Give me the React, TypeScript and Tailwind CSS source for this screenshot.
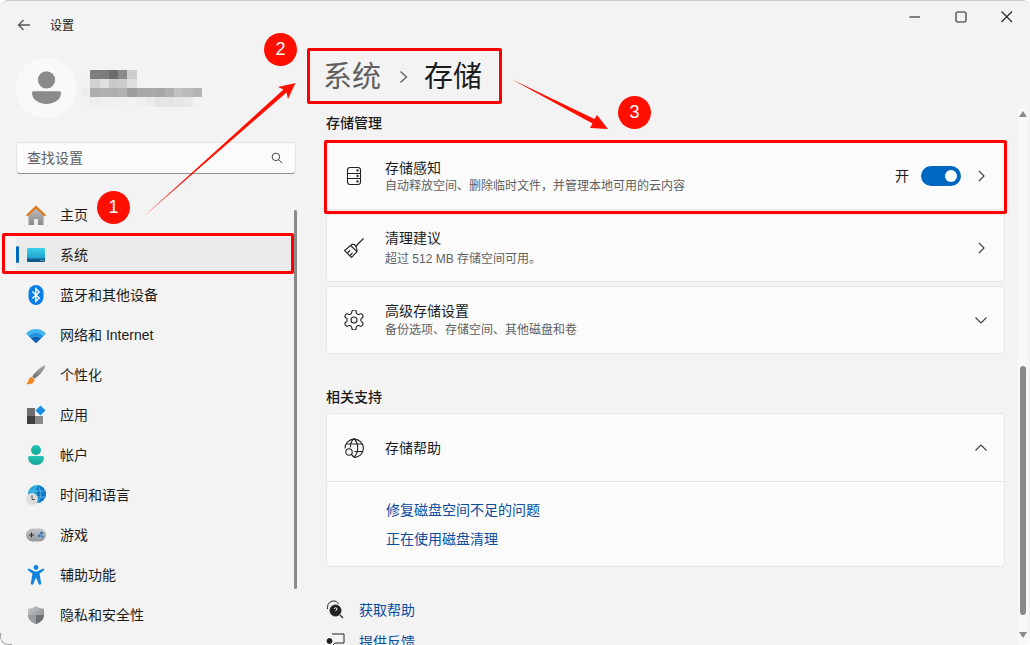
import type { ReactNode } from 'react';

function HomeIcon() {
  return (
    <svg viewBox="0 0 20 20" className="w-5 h-5">
      <defs>
        <linearGradient id="homeBody" x1="0" y1="0" x2="0" y2="1">
          <stop offset="0" stopColor="#bdbdbd" />
          <stop offset="1" stopColor="#8c8c8c" />
        </linearGradient>
      </defs>
      <path d="M2.500 9 10 2l7.500 7v11H12v-6H8v6H2.500z" fill="url(#homeBody)" />
      <path d="M8 14h4v6H8z" fill="#ececec" />
      <path d="M0 10 10 .5 20 10l-1.500 1.500L10 3.500 1.500 11.500z" fill="#e2760f" />
    </svg>
  );
}

function SystemIcon() {
  return (
    <svg viewBox="0 0 20 20" className="w-5 h-5">
      <defs>
        <linearGradient id="sysBody" x1="0" y1="0" x2="0" y2="1">
          <stop offset="0" stopColor="#38d0ea" />
          <stop offset="1" stopColor="#1a8fc4" />
        </linearGradient>
      </defs>
      <rect x="1" y="3" width="18" height="14" rx="1.500" fill="url(#sysBody)" />
      <path d="M1 13.500h18V15.500A1.500 1.500 0 0 1 17.500 17h-15A1.500 1.500 0 0 1 1 15.500z" fill="#0f5a86" />
      <rect x="14.500" y="14.800" width="1" height="1" fill="#b9e4f2" />
      <rect x="16.500" y="14.800" width="1" height="1" fill="#b9e4f2" />
    </svg>
  );
}

function BluetoothIcon() {
  return (
    <svg viewBox="0 0 20 20" className="w-5 h-5">
      <rect x="2.500" y="0" width="15" height="20" rx="7.500" fill="#0a7de8" />
      <path d="M6.400 6.400 13.200 13l-3.400 3.400V3.600L13.200 7l-6.800 6.600" fill="none" stroke="#fff" strokeWidth="1.400" />
    </svg>
  );
}

function WifiIcon() {
  return (
    <svg viewBox="0 0 20 20" className="w-5 h-5">
      <path d="M0 8.400C5.600 2.600 14.400 2.600 20 8.400l-2.500 2.500C13.200 6.800 6.800 6.800 2.500 10.900z" fill="#3fb6ee" />
      <path d="M2.500 10.900C6.800 6.800 13.200 6.800 17.500 10.900L15 13.400C12 10.600 8 10.600 5 13.400z" fill="#1a94e0" />
      <path d="M5 13.400C8 10.600 12 10.600 15 13.400L10 18.200z" fill="#0b5fb0" />
    </svg>
  );
}

function BrushIcon() {
  return (
    <svg viewBox="0 0 20 20" className="w-5 h-5">
      <defs>
        <linearGradient id="brushHandle" x1="0" y1="1" x2="1" y2="0">
          <stop offset="0" stopColor="#6f6f6f" />
          <stop offset="1" stopColor="#a8a8a8" />
        </linearGradient>
      </defs>
      <path d="M18.200 0.600c.8 0 1.400.8 1 1.500C17 6.500 12.500 11.500 8.500 13.800L6.200 11.500C9 7.500 14 2.500 18.200 0.600z" fill="url(#brushHandle)" />
      <path d="M5.600 12c-2.400.5-3 2.400-3.400 4-.2 1-.9 2-1.800 3 3 .6 6.600.2 7.800-2.800.5-1.200.3-1.900-.2-2.400z" fill="#f08a24" />
    </svg>
  );
}

function AppsIcon() {
  return (
    <svg viewBox="0 0 20 20" className="w-5 h-5">
      <rect x="1" y="3" width="8" height="8" fill="#6e6e6e" />
      <rect x="1" y="11" width="8" height="8" fill="#3f3f3f" />
      <rect x="9" y="11" width="8" height="8" fill="#8a8a8a" />
      <path d="M14.500 0.400 19.600 5.500 14.500 10.600 9.400 5.500z" fill="#1b8ee8" />
    </svg>
  );
}

function AccountIcon() {
  return (
    <svg viewBox="0 0 20 20" className="w-5 h-5">
      <defs>
        <linearGradient id="acc" x1="0" y1="0" x2="0" y2="1">
          <stop offset="0" stopColor="#27c4b4" />
          <stop offset="1" stopColor="#0fa596" />
        </linearGradient>
      </defs>
      <circle cx="10" cy="5" r="5" fill="url(#acc)" />
      <path d="M2 12.500A1.500 1.500 0 0 1 3.500 11h13a1.500 1.500 0 0 1 1.500 1.500c0 4-3.500 7.500-8 7.500s-8-3.500-8-7.500z" fill="url(#acc)" />
    </svg>
  );
}

function TimeIcon() {
  return (
    <svg viewBox="0 0 20 20" className="w-5 h-5">
      <circle cx="11" cy="9" r="9" fill="#1ea0d8" />
      <path d="M11 0a9 9 0 0 1 9 9 9 9 0 0 1-9 9z" fill="#0f78c8" />
      <path d="M2.500 6h17M2.500 12h17M11 0c-5 5-5 13 0 18M11 0c5 5 5 13 0 18" fill="none" stroke="#7fd4ee" strokeWidth=".6" />
      <circle cx="6" cy="14" r="6" fill="#dcdcdc" />
      <path d="M6 10.500V14.500h3" fill="none" stroke="#555" strokeWidth="1" />
    </svg>
  );
}

function GameIcon() {
  return (
    <svg viewBox="0 0 20 20" className="w-5 h-5">
      <defs>
        <linearGradient id="pad" x1="0" y1="0" x2="0" y2="1">
          <stop offset="0" stopColor="#c2c4c8" />
          <stop offset="1" stopColor="#94979c" />
        </linearGradient>
      </defs>
      <rect x="0" y="3.500" width="20" height="13" rx="6.500" fill="url(#pad)" />
      <path d="M5.500 7.500v5M3 10h5" stroke="#333" strokeWidth="1.100" />
      <circle cx="15.500" cy="8" r="1.300" fill="#1468c0" />
      <circle cx="13.500" cy="10.800" r="1.300" fill="#1468c0" />
      <circle cx="16.500" cy="11.500" r="1" fill="#1468c0" />
    </svg>
  );
}

function AccessIcon() {
  return (
    <svg viewBox="0 0 20 20" className="w-5 h-5">
      <circle cx="10" cy="2.500" r="2.400" fill="#1283dc" />
      <path d="M2.500 3.400 9 6.500h2l6.500-3.100 1 1.700L13.500 8.500l1.800 10.800-2.300.5L10 12.500 7 19.800l-2.300-.5L6.500 8.500 1.500 5.100z" fill="#1283dc" />
    </svg>
  );
}

function ShieldIcon() {
  return (
    <svg viewBox="0 0 20 20" className="w-5 h-5">
      <defs>
        <linearGradient id="shield" x1="0" y1="0" x2="1" y2="1">
          <stop offset="0" stopColor="#c9c9c9" />
          <stop offset="1" stopColor="#7d8288" />
        </linearGradient>
      </defs>
      <path d="M10 1c2.500 1.800 5 2.600 8 2.800v6.200c0 4.400-3.400 7.400-8 9-4.600-1.600-8-4.600-8-9V3.800C5 3.600 7.500 2.800 10 1z" fill="url(#shield)" />
      <path d="M10 1v18c-4.600-1.600-8-4.600-8-9h8z" fill="#9a9da1" />
      <path d="M10 10h8c0 4.400-3.400 7.400-8 9z" fill="#6b7076" />
    </svg>
  );
}

const navItems: { label: string; icon: ReactNode; active?: boolean }[] = [
  { label: '主页', icon: <HomeIcon /> },
  { label: '系统', icon: <SystemIcon />, active: true },
  { label: '蓝牙和其他设备', icon: <BluetoothIcon /> },
  { label: '网络和 Internet', icon: <WifiIcon /> },
  { label: '个性化', icon: <BrushIcon /> },
  { label: '应用', icon: <AppsIcon /> },
  { label: '帐户', icon: <AccountIcon /> },
  { label: '时间和语言', icon: <TimeIcon /> },
  { label: '游戏', icon: <GameIcon /> },
  { label: '辅助功能', icon: <AccessIcon /> },
  { label: '隐私和安全性', icon: <ShieldIcon /> },
];

// mosaic over the account name
const mosaic: string[][] = [
  ['bg-[#f3f3f3]', 'bg-[#7e7e7e]', 'bg-[#7c7c7c]', 'bg-[#6c6c6c]', 'bg-[#8a8a8a]', 'bg-[#cdcdcd]'],
  ['bg-[#f0f0f0]', 'bg-[#d2d2d2]', 'bg-[#dfdfdf]', 'bg-[#c9c9c9]', 'bg-[#cccccc]', 'bg-[#dedede]'],
  ['bg-[#ececec]', 'bg-[#adadad]', 'bg-[#b0b0b0]', 'bg-[#aeaeae]', 'bg-[#b2b2b2]', 'bg-[#9c9c9c]', 'bg-[#a8a8a8]', 'bg-[#aaaaaa]', 'bg-[#a6a6a6]', 'bg-[#b0b0b0]', 'bg-[#c2c2c2]', 'bg-[#bbbbbb]', 'bg-[#b4b4b4]'],
  ['bg-[#f2f2f2]', 'bg-[#eeeeee]', 'bg-[#f0f0f0]', 'bg-[#f1f1f1]', 'bg-[#f1f1f1]', 'bg-[#f2f2f2]', 'bg-[#f0f0f0]', 'bg-[#ececec]', 'bg-[#e6e6e6]', 'bg-[#e4e4e4]', 'bg-[#e6e6e6]', 'bg-[#e8e8e8]', 'bg-[#f2f2f2]'],
];

function Chevron({ dir }: { dir: 'right' | 'down' | 'up' }) {
  const d = dir === 'right' ? 'M6 3l5 5-5 5' : dir === 'down' ? 'M2.500 5.500 8 11l5.500-5.500' : 'M2.500 10.500 8 5l5.500 5.500';
  return (
    <svg viewBox="0 0 16 16" className="w-4 h-4 shrink-0" fill="none" stroke="#3c3c3c" strokeWidth="1.100">
      <path d={d} />
    </svg>
  );
}

function Card({ icon, title, sub, right, titleGap = 'mb-px' }: { icon: ReactNode; title: string; sub?: string; right: ReactNode; titleGap?: string }) {
  return (
    <div className="h-[68px] flex items-center pl-[17px] pr-[15px] bg-[#fbfbfb] border border-[#e6e6e6] rounded-[4px]">
      <div className="w-5 h-5 shrink-0">{icon}</div>
      <div className="ml-[21px] flex-1">
        <div className={`text-[14px] leading-[18px] text-[#1b1b1b] ${titleGap}`}>{title}</div>
        {sub && <div className="text-[12px] leading-[16px] text-[#5f5f5f]">{sub}</div>}
      </div>
      {right}
    </div>
  );
}

function Badge({ n, className }: { n: number; className: string }) {
  return (
    <div className={`absolute w-[33px] h-[33px] rounded-full bg-[#ff0f00] text-white text-[18px] flex items-center justify-center ${className}`}>
      {n}
    </div>
  );
}

export default function App() {
  return (
    <div className="w-[1030px] h-[645px] bg-white overflow-hidden font-['Liberation_Sans','Noto_Sans_CJK_SC',sans-serif]">
      <div className="relative w-full h-full bg-[#f3f3f3] rounded-lg overflow-hidden">
        {/* Title bar */}
        <div className="h-[50px] flex items-center">
          <svg viewBox="0 0 16 16" className="w-4 h-4 ml-4" fill="none" stroke="#555" strokeWidth="1.300">
            <path d="M14 8H2.500M7.500 3 2.500 8l5 5" />
          </svg>
          <span className="ml-[18px] mt-[2px] text-[12px] text-[#1b1b1b]">设置</span>
          <div className="ml-auto flex items-center mr-[15px] gap-[30px] -mt-[16px]">
            <svg viewBox="0 0 16 16" className="w-4 h-4" fill="none" stroke="#222" strokeWidth="1.100">
              <path d="M2.500 8h10.500" />
            </svg>
            <svg viewBox="0 0 16 16" className="w-4 h-4" fill="none" stroke="#222" strokeWidth="1.100">
              <rect x="3" y="3" width="10" height="10" rx="1.500" />
            </svg>
            <svg viewBox="0 0 16 16" className="w-4 h-4" fill="none" stroke="#222" strokeWidth="1.100">
              <path d="M2.500 2.500 13 13M13 2.500 2.500 13" />
            </svg>
          </div>
        </div>

        <div className="flex h-[595px]">
          {/* Sidebar */}
          <div className="relative w-[310px] shrink-0 pl-4 pr-[14px] pt-2">
            <div className="flex items-center h-[60px]">
              <div className="w-[60px] h-[60px] rounded-full bg-[#f9f9f9] flex items-center justify-center">
                <svg viewBox="0 0 32 38" className="w-[29px] h-[35px]">
                  <circle cx="16" cy="9.500" r="9.500" fill="#8b8b8b" />
                  <path d="M1.500 22h29c1 0 1.500.8 1.500 2 0 7-7 12-16 12S0 31 0 24c0-1.200.5-2 1.500-2z" fill="#8b8b8b" />
                </svg>
              </div>
              <div className="ml-[5px]">
                {mosaic.map((row, i) => (
                  <div key={i} className="flex h-[9.250px]">
                    {row.map((c, j) => (
                      <div key={j} className={`w-[9.300px] h-full ${c}`} />
                    ))}
                  </div>
                ))}
              </div>
            </div>

            <div className="mt-6 h-8 flex items-center justify-between pl-[10px] pr-[12px] bg-[#fbfbfb] border border-[#e4e4e4] border-b-[#8f8f8f] rounded-[4px]">
              <span className="text-[14px] text-[#5f5f5f]">查找设置</span>
              <svg viewBox="0 0 16 16" className="w-3 h-3" fill="none" stroke="#444" strokeWidth="1.300">
                <circle cx="6.500" cy="6.500" r="5" />
                <path d="M10.200 10.200 15 15" />
              </svg>
            </div>

            <div className="mt-[23px] flex flex-col gap-1">
              {navItems.map((item) => (
                <div
                  key={item.label}
                  className={`relative h-9 shrink-0 flex items-center pl-[10px] rounded-[4px] ${item.active ? 'bg-[#eaeaea]' : ''}`}
                >
                  {item.active && <div className="absolute left-0 top-[9px] w-[3px] h-[17px] rounded-full bg-[#0067c0]" />}
                  <div className="w-5 h-5 shrink-0">{item.icon}</div>
                  <span className="ml-[14px] text-[14px] text-[#1b1b1b] whitespace-nowrap">{item.label}</span>
                </div>
              ))}
            </div>

            {/* Sidebar scrollbar */}
            <div className="absolute left-[294px] top-[160px] w-[3px] h-[379px] rounded-full bg-[#8a8a8a]" />
          </div>

          {/* Content */}
          <div className="w-[679px] ml-4 shrink-0">
            <div className="h-[52px] pt-[4px] flex items-center text-[29px] -ml-[3px]">
              <span className="text-[#5f5f5f]">系统</span>
              <svg viewBox="0 0 16 16" className="w-4 h-4 ml-[15px] mr-[12px] -mt-[3px]" fill="none" stroke="#5f5f5f" strokeWidth="1.300">
                <path d="M4.500 2.500 10.500 8l-6 5.500" />
              </svg>
              <span className="text-[#1b1b1b]">存储</span>
            </div>

            <div className="mt-[11px] mb-[9px] text-[14px] leading-5 font-medium text-[#1b1b1b]">存储管理</div>
            <div className="flex flex-col gap-1">
              <Card
                icon={
                  <svg viewBox="0 0 20 20" className="w-5 h-5" fill="none" stroke="#222" strokeWidth="1.100">
                    <rect x="3.500" y="1.500" width="13" height="17" rx="2.500" />
                    <path d="M3.500 7.500h13M3.500 12.500h13" />
                    <circle cx="13.500" cy="4.500" r=".6" fill="#222" />
                    <circle cx="13.500" cy="10" r=".6" fill="#222" />
                    <circle cx="13.500" cy="15.500" r=".6" fill="#222" />
                  </svg>
                }
                title="存储感知"
                sub="自动释放空间、删除临时文件，并管理本地可用的云内容"
                right={
                  <div className="flex items-center">
                    <span className="text-[14px] text-[#1b1b1b]">开</span>
                    <div className="ml-3 w-10 h-5 rounded-full bg-[#0067c0] flex items-center justify-end pr-[4px]">
                      <div className="w-3 h-3 rounded-full bg-white" />
                    </div>
                    <div className="ml-3">
                      <Chevron dir="right" />
                    </div>
                  </div>
                }
              />
              <Card
                icon={
                  <svg viewBox="0 0 20 20" className="w-5 h-5" fill="none" stroke="#222" strokeWidth="1.100">
                    <path d="M19.500 .5 11.500 8.500" />
                    <path d="M6.500 7.500 13 13.500 7.500 19.500 .5 12.500z" />
                    <path d="M6.500 7.500c1.500-1.500 3.500-1.500 4.800-.2s1.500 3.500 1.700 6.200" />
                    <path d="M3.500 15 6 12.500M6 17.500l2.500-2.500" />
                  </svg>
                }
                title="清理建议"
                titleGap="mb-[4px]"
                sub="超过 512 MB 存储空间可用。"
                right={<Chevron dir="right" />}
              />
              <Card
                icon={
                  <svg viewBox="2 2 20 20" className="w-5 h-5" fill="none" stroke="#222" strokeWidth="1.100" strokeLinejoin="round">
                    <path d="M12.220 2h-.44a2 2 0 0 0-2 2v.18a2 2 0 0 1-1 1.730l-.43.250a2 2 0 0 1-2 0l-.15-.080a2 2 0 0 0-2.730.730l-.220.380a2 2 0 0 0 .730 2.730l.150.100a2 2 0 0 1 1 1.720v.510a2 2 0 0 1-1 1.740l-.150.090a2 2 0 0 0-.730 2.730l.220.380a2 2 0 0 0 2.730.730l.150-.080a2 2 0 0 1 2 0l.430.250a2 2 0 0 1 1 1.730V20a2 2 0 0 0 2 2h.440a2 2 0 0 0 2-2v-.180a2 2 0 0 1 1-1.730l.430-.250a2 2 0 0 1 2 0l.150.080a2 2 0 0 0 2.730-.730l.220-.390a2 2 0 0 0-.730-2.730l-.150-.080a2 2 0 0 1-1-1.740v-.500a2 2 0 0 1 1-1.740l.150-.090a2 2 0 0 0 .730-2.730l-.220-.380a2 2 0 0 0-2.730-.730l-.150.080a2 2 0 0 1-2 0l-.430-.250a2 2 0 0 1-1-1.730V4a2 2 0 0 0-2-2z" />
                    <circle cx="12" cy="12" r="3" />
                  </svg>
                }
                title="高级存储设置"
                titleGap="mb-[2px]"
                sub="备份选项、存储空间、其他磁盘和卷"
                right={<Chevron dir="down" />}
              />
            </div>

            <div className="mt-[33px] mb-[6px] text-[14px] leading-5 font-medium text-[#1b1b1b]">相关支持</div>
            <div className="bg-[#fbfbfb] border border-[#e6e6e6] rounded-[4px]">
              <div className="h-[68px] flex items-center pl-[17px] pr-[15px] border-b border-[#e6e6e6]">
                <svg viewBox="0 0 20 20" className="w-5 h-5 shrink-0" fill="none" stroke="#222" strokeWidth="1.100">
                  <path d="M1 10.500A9.200 9.200 0 1 1 10 19.500" />
                  <path d="M2 6h16.500M10.500 13.500h8.500M10 .5C7.500 2.500 6.500 5 6.300 9.500M10 .5c5 5 5 13.500 0 19" />
                  <circle cx="5" cy="14" r="3.200" />
                  <path d="M7.400 16.400 9.800 19" strokeWidth="1.400" />
                </svg>
                <span className="ml-[21px] mt-[2px] flex-1 text-[14px] text-[#1b1b1b]">存储帮助</span>
                <Chevron dir="up" />
              </div>
              <div className="h-[84px] pl-[59px] pt-[18px] text-[14px] leading-[20px] text-[#0a4c9e]">
                <div>修复磁盘空间不足的问题</div>
                <div className="mt-[9px]">正在使用磁盘清理</div>
              </div>
            </div>

            <div className="mt-[33px] flex items-center h-5 text-[14px] text-[#0a4c9e]">
              <svg viewBox="0 0 20 20" className="w-5 h-5 shrink-0" fill="none" stroke="#222" strokeWidth="1">
                <path d="M1.500 9C1 4 4 1 7.500 1c2.500 0 4 1 5 3" />
                <circle cx="9.500" cy="10.500" r="5.500" fill="#222" />
                <path d="M14 15l3 3" strokeWidth="1.300" />
                <path d="M8.200 9c0-1.700 2.800-1.700 2.800 0 0 1-1.400 1-1.400 2.200" stroke="#fff" strokeWidth="1" />
              </svg>
              <span className="ml-[13px]">获取帮助</span>
            </div>
            <div className="mt-3 flex items-center h-5 text-[14px] text-[#0a4c9e]">
              <svg viewBox="0 0 20 20" className="w-5 h-5 shrink-0" fill="none" stroke="#222" strokeWidth="1">
                <path d="M6 2h12v9H9l-2 2" />
                <circle cx="3.500" cy="9" r="2.500" fill="#222" />
              </svg>
              <span className="ml-[13px]">提供反馈</span>
            </div>
          </div>
        </div>

        {/* Page scrollbar */}
        <div className="absolute left-[1018px] top-[108px] bottom-0 w-[10px] rounded-t-full bg-[#f8f8f8] flex flex-col items-center">
          <div className="mt-[3px] w-0 h-0 border-x-[4px] border-x-transparent border-b-[6px] border-b-[#8a8a8a]" />
          <div className="mt-[249px] w-[6px] h-[249px] rounded-full bg-[#8a8a8a]" />
          <div className="mt-[17px] w-0 h-0 border-x-[4px] border-x-transparent border-t-[6px] border-t-[#8a8a8a]" />
        </div>

        {/* Window edge */}
        <div className="absolute inset-0 rounded-lg border-t border-[#c9c9c9] pointer-events-none" />
        <div className="absolute left-0 bottom-0 w-3 h-3 rounded-bl-lg border-l border-b border-[#a0a0a0] pointer-events-none" />

        {/* Annotations */}
        <div className="absolute left-[2px] top-[233px] w-[292px] h-[41px] border-[3px] border-[#ff0000] rounded-[2px]" />
        <div className="absolute left-[307px] top-[48px] w-[195px] h-[56px] border-[3px] border-[#ff0000] rounded-[2px]" />
        <div className="absolute left-[324px] top-[140px] w-[683px] h-[74px] border-[3px] border-[#ff0000] rounded-[2px]" />
        <svg viewBox="0 0 1030 645" className="absolute inset-0 w-[1030px] h-[645px] pointer-events-none">
          <path d="M143 217 283.500 89.500 278 87 295.500 83 288 99 286.500 92.500z" fill="#ff0f00" />
          <path d="M511 79 594.500 119 597 115 608 129 590 128 592.500 123.500z" fill="#ff0f00" />
        </svg>
        <Badge n={1} className="left-[97px] top-[191px]" />
        <Badge n={2} className="left-[264px] top-[33px]" />
        <Badge n={3} className="left-[618px] top-[96px]" />
      </div>
    </div>
  );
}
